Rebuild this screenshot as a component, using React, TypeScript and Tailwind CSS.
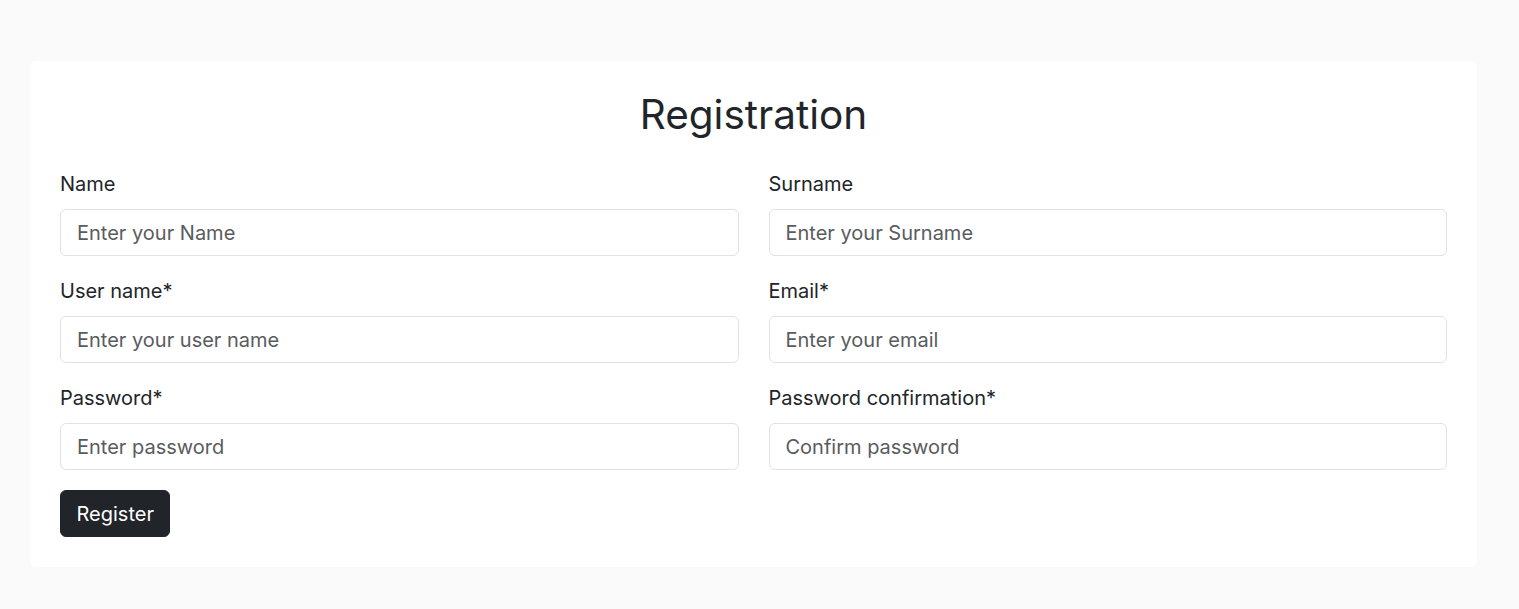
export default function App() {
  const fields = [
    ['Name', 'Enter your Name', 'text'],
    ['Surname', 'Enter your Surname', 'text'],
    ['User name*', 'Enter your user name', 'text'],
    ['Email*', 'Enter your email', 'email'],
    ['Password*', 'Enter password', 'password'],
    ['Password confirmation*', 'Confirm password', 'password'],
  ]

  return (
    <div className="min-h-[609px] bg-[#fafafa] pt-[61px] pb-[42px] font-['Inter',sans-serif] text-[#212529]">
      <div className="ml-[30px] mr-[42px] rounded-[6px] bg-white px-[30px] pt-[30px] pb-[30px]">
        <h1 className="mb-[30px] text-center text-[40.5px] leading-[48px] font-normal">Registration</h1>
        <form className="grid grid-cols-2 gap-x-[30px] gap-y-[20px]">
          {fields.map(([label, placeholder, type]) => (
            <div key={label}>
              <label className="mb-[10px] block text-[20px] leading-[30px]">{label}</label>
              <input
                type={type}
                placeholder={placeholder}
                className="block h-[47px] w-full rounded-[6px] border border-[#dee2e6] bg-white px-[16px] text-[20px] outline-none placeholder:text-[#595c5f]"
              />
            </div>
          ))}
        </form>
        <button className="mt-[20px] h-[47px] rounded-[6px] border border-[#212529] bg-[#212529] px-[15.5px] text-[20px] text-white">
          Register
        </button>
      </div>
    </div>
  )
}
